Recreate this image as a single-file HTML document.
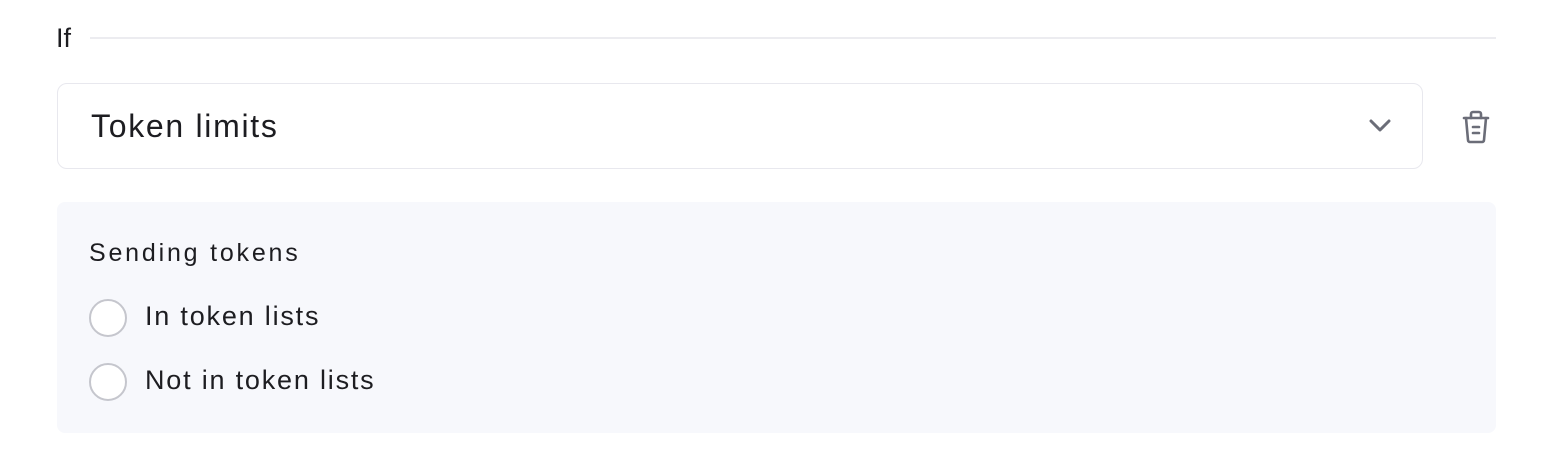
<!DOCTYPE html>
<html><head><style>
body{margin:0;width:1550px;height:468px;background:#fff;font-family:"Liberation Sans",sans-serif;color:#1d1d21;position:relative;overflow:hidden}
.a{position:absolute;white-space:nowrap}
</style></head><body>
<div class="a" style="left:56px;top:22px;font-size:27px;line-height:32px">If</div>
<div class="a" style="left:90px;top:37px;width:1406px;height:2px;background:#ececf0"></div>
<div class="a" style="left:57px;top:83px;width:1364px;height:84px;border:1.5px solid #e8e8ee;border-radius:10px"></div>
<div class="a" style="left:91px;top:107px;font-size:32px;line-height:38px;letter-spacing:1.7px">Token limits</div>
<svg class="a" style="left:1366px;top:116px" width="28" height="20" viewBox="0 0 28 20"><path d="M5 5l9 9 9-9" fill="none" stroke="#6b6d78" stroke-width="3" stroke-linecap="round" stroke-linejoin="round"/></svg>
<svg class="a" style="left:1460px;top:108px" width="32" height="38" viewBox="0 0 32 38"><g fill="none" stroke="#6b6d78" stroke-width="2.6" stroke-linecap="round" stroke-linejoin="round"><path d="M4 10h24"/><path d="M11 10V6a2 2 0 0 1 2-2h6a2 2 0 0 1 2 2v4"/><path d="M6 10l2 22a2 2 0 0 0 2 2h12a2 2 0 0 0 2-2l2-22"/><path d="M13 19h6M13 25h6"/></g></svg>
<div class="a" style="left:57px;top:202px;width:1439px;height:231px;background:#f7f8fc;border-radius:8px"></div>
<div class="a" style="left:89px;top:238px;font-size:25px;line-height:30px;letter-spacing:2.8px">Sending tokens</div>
<div class="a" style="left:89px;top:299px;width:34px;height:34px;border:2px solid #c5c6cd;border-radius:50%;background:#fff"></div>
<div class="a" style="left:145px;top:300px;font-size:27px;line-height:32px;letter-spacing:1.8px">In token lists</div>
<div class="a" style="left:89px;top:363px;width:34px;height:34px;border:2px solid #c5c6cd;border-radius:50%;background:#fff"></div>
<div class="a" style="left:145px;top:364px;font-size:27px;line-height:32px;letter-spacing:1.8px">Not in token lists</div>
</body></html>
